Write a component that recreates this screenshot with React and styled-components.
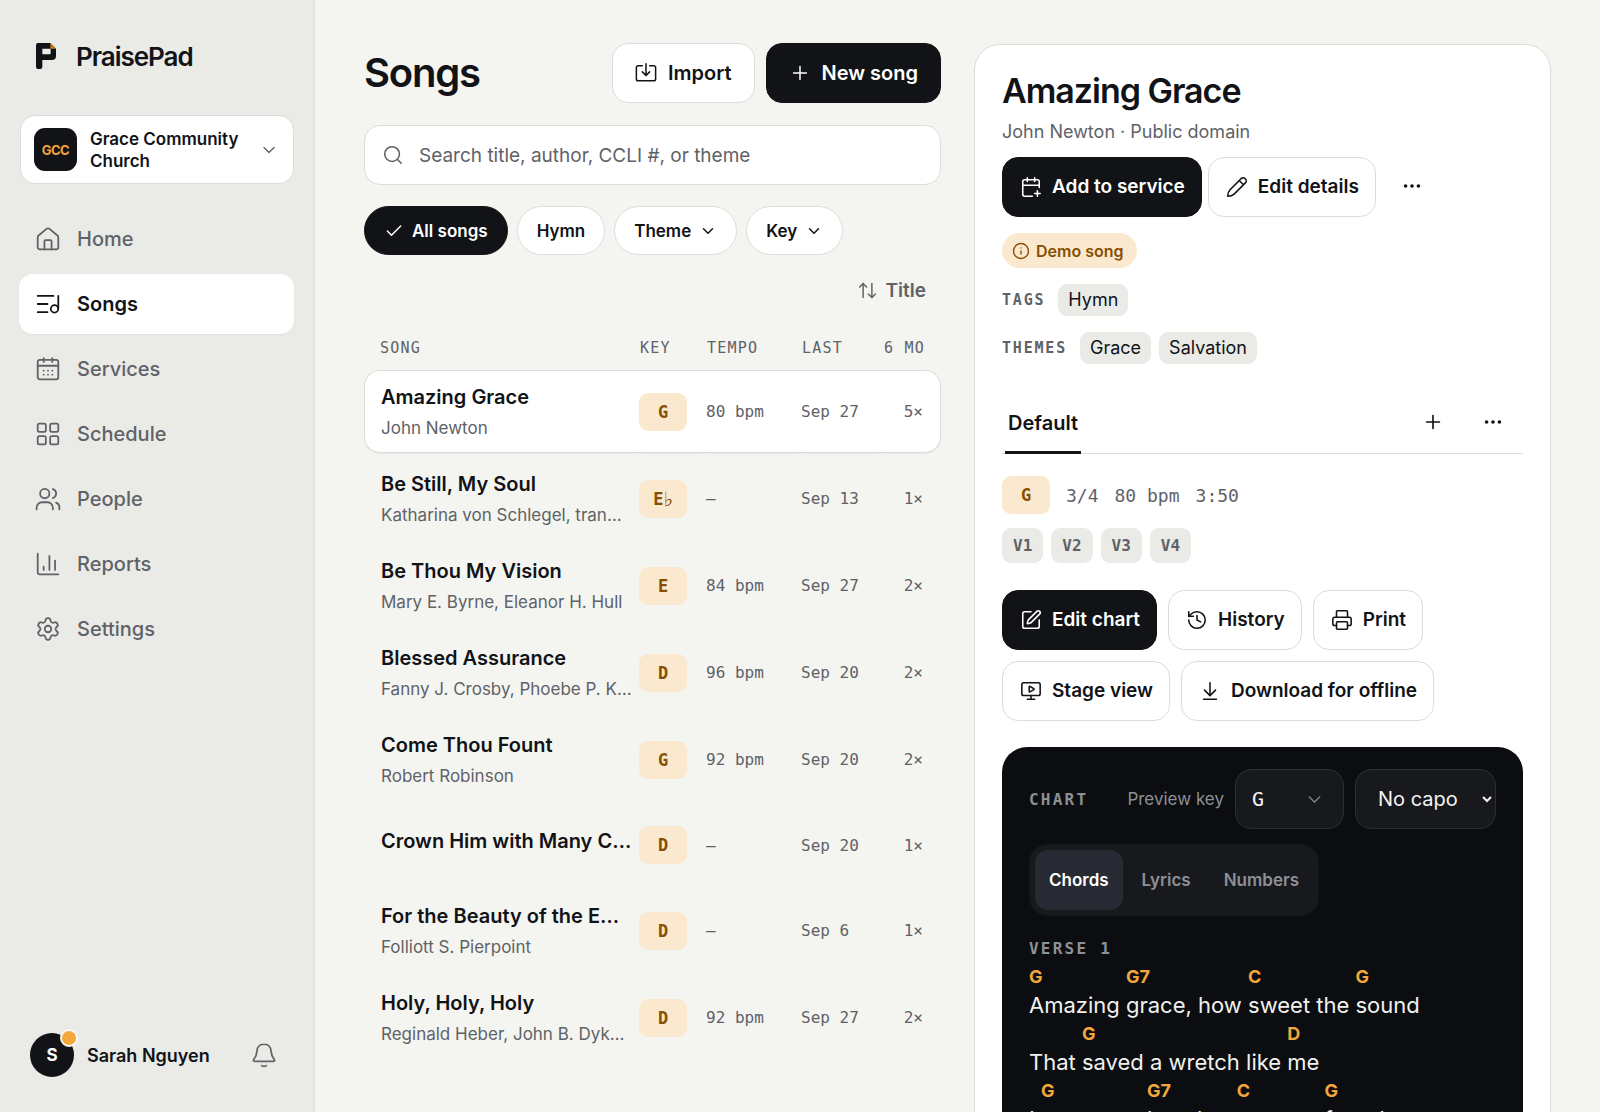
import React from "react";
import styled, { createGlobalStyle, css } from "styled-components";
import {
  ArrowDownToLine,
  ArrowUpDown,
  CalendarPlus,
  Check,
  ChevronDown,
  Ellipsis,
  History,
  Info,
  MonitorPlay,
  Plus,
  Printer,
  Search,
  Settings,
  SquarePen,
} from "lucide-react";

const color = {
  ink: "#111317",
  muted: "#5f6267",
  line: "#dcddda",
  page: "#f4f5f1",
  side: "#eaebe7",
  amber: "#f2a63b",
  amberSoft: "#fbe9cf",
  amberInk: "#874f00",
  panel: "#0b0d10",
  control: "#17191d",
  controlLine: "#2c2e33",
  dim: "#8d9096",
};

const sans = `Inter, "Liberation Sans", sans-serif`;
const mono = `"DejaVu Sans Mono", "Liberation Mono", monospace`;

function Stroke({ size = 26, children }) {
  return (
    <svg
      width={size}
      height={size}
      viewBox="0 0 24 24"
      fill="none"
      stroke="currentColor"
      strokeWidth="1.65"
      strokeLinecap="round"
      strokeLinejoin="round"
      aria-hidden="true"
    >
      {children}
    </svg>
  );
}

const HomeIcon = () => (
  <Stroke>
    <path d="M2.500 10.500c0-.7.3-1.300.8-1.700l7.300-6.100a2.200 2.200 0 0 1 2.800 0l7.300 6.100c.5.4.8 1 .8 1.700v9a2 2 0 0 1-2 2h-15a2 2 0 0 1-2-2z" />
    <path d="M8.700 21.500V14a1 1 0 0 1 1-1h4.600a1 1 0 0 1 1 1v7.500" />
  </Stroke>
);
const SongsIcon = () => (
  <Stroke>
    <path d="M2.500 4.500h14.500M2.500 12h9M2.500 19.500h9M21.500 4.500V16" />
    <circle cx="18" cy="16.500" r="3.400" />
  </Stroke>
);
const ServicesIcon = () => (
  <Stroke>
    <rect x="2.500" y="3.500" width="19" height="18" rx="2" />
    <path d="M2.500 9h19M8 2v3.500M16 2v3.500M8 13.500h.01M12 13.500h.01M16 13.500h.01M8 17.200h.01M12 17.200h.01M16 17.200h.01" />
  </Stroke>
);
const ScheduleIcon = () => (
  <Stroke>
    <rect x="2.500" y="2.500" width="7.500" height="7.500" rx="1.500" />
    <rect x="14" y="2.500" width="7.500" height="7.500" rx="1.500" />
    <rect x="2.500" y="14" width="7.500" height="7.500" rx="1.500" />
    <rect x="14" y="14" width="7.500" height="7.500" rx="1.500" />
  </Stroke>
);
const PeopleIcon = () => (
  <Stroke>
    <circle cx="9" cy="7" r="4.300" />
    <path d="M1.500 21.500V20a5 5 0 0 1 5-5h5a5 5 0 0 1 5 5v1.500M16.500 2.900a4.300 4.300 0 0 1 0 8.200M19.500 15.300a4.500 4.500 0 0 1 3 4.200v2" />
  </Stroke>
);
const ReportsIcon = () => (
  <Stroke>
    <path d="M2.500 2.500v17a2 2 0 0 0 2 2h17M8 14.500v3M13.300 4.500v13M18.500 9v8.500" />
  </Stroke>
);
const BellIcon = () => (
  <Stroke>
    <path d="M12 2c-3.800 0-6.300 2.800-6.500 6.300-.2 3.300-.9 5.400-3 7.900-.6.800-.2 1.600.7 1.600h17.600c.9 0 1.300-.8.7-1.600-2.100-2.500-2.800-4.600-3-7.900C18.300 4.800 15.800 2 12 2z" />
    <path d="M10 21.800c1.200.900 2.800.900 4 0" />
  </Stroke>
);
const ImportIcon = () => (
  <Stroke size={22}>
    <path d="M8 4H3.500a2 2 0 0 0-2 2v12.500a2 2 0 0 0 2 2h17a2 2 0 0 0 2-2V6a2 2 0 0 0-2-2H16M12 2v12.500M8 10.800l4 4 4-4" />
  </Stroke>
);
const PencilIcon = () => (
  <Stroke size={22}>
    <path d="M1.800 22.200c0-2.900.6-5.200 2.400-7L16.800 2.600a2.600 2.600 0 0 1 3.700 0l.9.900a2.600 2.600 0 0 1 0 3.700L8.800 19.800c-1.800 1.800-4.100 2.400-7 2.400zM14.500 5l4.500 4.500" />
  </Stroke>
);

const nav = [
  { label: "Home", icon: <HomeIcon /> },
  { label: "Songs", icon: <SongsIcon />, active: true },
  { label: "Services", icon: <ServicesIcon /> },
  { label: "Schedule", icon: <ScheduleIcon /> },
  { label: "People", icon: <PeopleIcon /> },
  { label: "Reports", icon: <ReportsIcon /> },
  { label: "Settings", icon: <Settings size={26} strokeWidth={1.65} /> },
];

const songs = [
  { title: "Amazing Grace", by: "John Newton", songKey: "G", tempo: "80 bpm", last: "Sep 27", count: "5×", selected: true },
  { title: "Be Still, My Soul", by: "Katharina von Schlegel, tran…", songKey: "E", flat: true, tempo: "—", last: "Sep 13", count: "1×" },
  { title: "Be Thou My Vision", by: "Mary E. Byrne, Eleanor H. Hull", songKey: "E", tempo: "84 bpm", last: "Sep 27", count: "2×" },
  { title: "Blessed Assurance", by: "Fanny J. Crosby, Phoebe P. K…", songKey: "D", tempo: "96 bpm", last: "Sep 20", count: "2×" },
  { title: "Come Thou Fount", by: "Robert Robinson", songKey: "G", tempo: "92 bpm", last: "Sep 20", count: "2×" },
  { title: "Crown Him with Many C…", songKey: "D", tempo: "—", last: "Sep 20", count: "1×" },
  { title: "For the Beauty of the E…", by: "Folliott S. Pierpoint", songKey: "D", tempo: "—", last: "Sep 6", count: "1×" },
  { title: "Holy, Holy, Holy", by: "Reginald Heber, John B. Dyk…", songKey: "D", tempo: "92 bpm", last: "Sep 27", count: "2×" },
];

const verse = [
  [["G", "Amazing "], ["G7", "grace, how "], ["C", "sweet the "], ["G", "sound"]],
  [["", "That "], ["G", "saved a wretch like "], ["D", "me"]],
  [["", "I "], ["G", "once was "], ["G7", "lost, but "], ["C", "now am "], ["G", "found"]],
];

function App() {
  return (
    <Shell>
      <GlobalStyle />
      <Sidebar />
      <Main>
        <SongList />
        <SongDetail />
      </Main>
    </Shell>
  );
}

function Sidebar() {
  return (
    <SidebarStyled>
      <Brand href="#">
        <svg width="20" height="26" viewBox="0 0 60 78" aria-hidden="true">
          <path
            fill={color.ink}
            d="M6 0H43L60 17V39a12 12 0 0 1-12 12H19V72a6 6 0 0 1-6 6H6a6 6 0 0 1-6-6V6a6 6 0 0 1 6-6zM19 17V34H41a3 3 0 0 0 3-3V17z"
          />
          <path fill="#c97a17" d="M43 0 60 17H46a3 3 0 0 1-3-3z" />
        </svg>
        PraisePad
      </Brand>

      <OrgButton>
        <OrgMark>GCC</OrgMark>
        <OrgName>Grace Community Church</OrgName>
        <ChevronDown size={20} strokeWidth={1.6} />
      </OrgButton>

      <NavStyled aria-label="Main">
        {nav.map((item) => (
          <NavLink key={item.label} href="#" $active={item.active}>
            {item.icon}
            {item.label}
          </NavLink>
        ))}
      </NavStyled>

      <Account>
        <Avatar>
          S<Dot />
        </Avatar>
        <AccountName>Sarah Nguyen</AccountName>
        <BellButton aria-label="Notifications">
          <BellIcon />
        </BellButton>
      </Account>
    </SidebarStyled>
  );
}

function SongList() {
  return (
    <Column>
      <ListHeader>
        <PageTitle>Songs</PageTitle>
        <Actions $gap={11}>
          <Button $large>
            <ImportIcon /> Import
          </Button>
          <Button $large $primary>
            <Plus size={22} strokeWidth={1.6} /> New song
          </Button>
        </Actions>
      </ListHeader>

      <SearchBox>
        <Search size={22} strokeWidth={1.7} />
        <SearchInput type="search" aria-label="Search songs" placeholder="Search title, author, CCLI #, or theme" />
      </SearchBox>

      <Chips>
        <Chip $active>
          <Check size={20} strokeWidth={1.8} /> All songs
        </Chip>
        <Chip>Hymn</Chip>
        <Chip>
          Theme <ChevronDown size={18} strokeWidth={2} />
        </Chip>
        <Chip>
          Key <ChevronDown size={18} strokeWidth={2} />
        </Chip>
      </Chips>

      <SortButton>
        <ArrowUpDown size={21} strokeWidth={1.7} /> Title
      </SortButton>

      <Table>
        <colgroup>
          <col />
          <col width="67" />
          <col width="95" />
          <col width="80" />
          <col width="60" />
        </colgroup>
        <thead>
          <tr>
            <HeadCell>SONG</HeadCell>
            <HeadCell>KEY</HeadCell>
            <HeadCell>TEMPO</HeadCell>
            <HeadCell>LAST</HeadCell>
            <HeadCell $end>6 MO</HeadCell>
          </tr>
        </thead>
        <tbody>
          {songs.map((song) => (
            <Row key={song.title} $selected={song.selected} $short={!song.by}>
              <Cell>
                <SongTitle>{song.title}</SongTitle>
                {song.by && <SongBy>{song.by}</SongBy>}
              </Cell>
              <Cell>
                <KeyBadge>
                  {song.songKey}
                  {song.flat && <Flat>♭</Flat>}
                </KeyBadge>
              </Cell>
              <Cell>{song.tempo}</Cell>
              <Cell>{song.last}</Cell>
              <Cell $end>{song.count}</Cell>
            </Row>
          ))}
        </tbody>
      </Table>
    </Column>
  );
}

function SongDetail() {
  return (
    <Detail>
      <DetailTitle>Amazing Grace</DetailTitle>
      <DetailBy>John Newton · Public domain</DetailBy>
      <Actions $gap={6}>
        <Button $primary>
          <CalendarPlus size={22} strokeWidth={1.7} /> Add to service
        </Button>
        <Button>
          <PencilIcon /> Edit details
        </Button>
        <IconButton aria-label="More song actions">
          <Ellipsis size={22} strokeWidth={2} />
        </IconButton>
      </Actions>

      <DemoPill>
        <Info size={18} strokeWidth={1.8} /> Demo song
      </DemoPill>
      <TagRow>
        <TagLabel>TAGS</TagLabel>
        <Tag>Hymn</Tag>
      </TagRow>
      <TagRow>
        <TagLabel>THEMES</TagLabel>
        <Tag>Grace</Tag>
        <Tag>Salvation</Tag>
      </TagRow>

      <TabBar>
        <Tab>Default</Tab>
        <TabTools>
          <IconButton aria-label="Add arrangement">
            <Plus size={22} strokeWidth={1.8} />
          </IconButton>
          <IconButton aria-label="Arrangement actions">
            <Ellipsis size={22} strokeWidth={2} />
          </IconButton>
        </TabTools>
      </TabBar>

      <Meta>
        <KeyBadge>G</KeyBadge>
        <span>3/4</span>
        <span>80 bpm</span>
        <span>3:50</span>
      </Meta>
      <Sections>
        <SectionChip>V1</SectionChip>
        <SectionChip>V2</SectionChip>
        <SectionChip>V3</SectionChip>
        <SectionChip>V4</SectionChip>
      </Sections>

      <Actions $gap={11}>
        <Button $primary>
          <SquarePen size={22} strokeWidth={1.7} /> Edit chart
        </Button>
        <Button>
          <History size={22} strokeWidth={1.7} /> History
        </Button>
        <Button>
          <Printer size={22} strokeWidth={1.7} /> Print
        </Button>
        <Button>
          <MonitorPlay size={22} strokeWidth={1.7} /> Stage view
        </Button>
        <Button>
          <ArrowDownToLine size={22} strokeWidth={1.7} /> Download for offline
        </Button>
      </Actions>

      <Chart />
    </Detail>
  );
}

function Chart() {
  return (
    <ChartPanel>
      <ChartBar>
        <ChartLabel>CHART</ChartLabel>
        <PreviewLabel htmlFor="preview-key">Preview key</PreviewLabel>
        <KeySelectWrap>
          <KeySelect id="preview-key" defaultValue="G">
            <option>G</option>
            <option>A</option>
            <option>D</option>
          </KeySelect>
          <ChevronDown size={21} strokeWidth={1.6} />
        </KeySelectWrap>
        <CapoSelect aria-label="Capo" defaultValue="No capo">
          <option>No capo</option>
          <option>Capo 1</option>
        </CapoSelect>
      </ChartBar>

      <Segments>
        <Segment $active>Chords</Segment>
        <Segment>Lyrics</Segment>
        <Segment>Numbers</Segment>
      </Segments>

      <VerseLabel as="h3">VERSE 1</VerseLabel>
      {verse.map((line, i) => (
        <Line key={i}>
          {line.map(([chord, text], j) => (
            <Syllable key={j}>
              <Chord>{chord}</Chord>
              <Lyric>{text}</Lyric>
            </Syllable>
          ))}
        </Line>
      ))}
    </ChartPanel>
  );
}

const GlobalStyle = createGlobalStyle`
  * {
    box-sizing: border-box;
  }
  body {
    margin: 0;
    background: ${color.page};
    color: ${color.ink};
    font-family: ${sans};
    font-size: 18px;
  }
  h1, h2, h3, p {
    margin: 0;
  }
  button, input, select {
    font-family: inherit;
    color: inherit;
  }
  button {
    cursor: pointer;
  }
  svg {
    flex-shrink: 0;
  }
`;

const Shell = styled.div`
  display: flex;
  height: 100vh;
  overflow: hidden;
`;

const SidebarStyled = styled.aside`
  display: flex;
  flex-direction: column;
  flex: 0 0 315px;
  padding: 34px 20px 35px;
  background: ${color.side};
  border-right: 2px solid #e1e2de;
`;

const Brand = styled.a`
  display: flex;
  align-items: center;
  gap: 20px;
  height: 44px;
  padding-left: 16px;
  color: ${color.ink};
  font-size: 26px;
  font-weight: 600;
  letter-spacing: -0.04em;
  text-decoration: none;
`;

const OrgButton = styled.button`
  display: flex;
  align-items: center;
  gap: 13px;
  height: 69px;
  margin: 37px -1px 0 0;
  padding: 0 14px 0 13px;
  background: #fff;
  border: 1px solid ${color.line};
  border-radius: 15px;
  text-align: left;

  svg {
    color: ${color.muted};
  }
`;

const OrgMark = styled.span`
  display: grid;
  place-items: center;
  flex: 0 0 43px;
  height: 43px;
  border-radius: 11px;
  background: ${color.ink};
  color: ${color.amber};
  font-size: 13px;
  font-weight: 700;
  letter-spacing: -0.04em;
`;

const OrgName = styled.span`
  flex: 1;
  font-size: 17px;
  font-weight: 600;
  line-height: 22px;
`;

const NavStyled = styled.nav`
  display: flex;
  flex-direction: column;
  gap: 5px;
  margin: 25px -1px 0;
`;

const NavLink = styled.a`
  display: flex;
  align-items: center;
  gap: 16px;
  height: 60px;
  padding: 0 16px;
  border-radius: 14px;
  color: ${color.muted};
  font-size: 20px;
  font-weight: 500;
  text-decoration: none;
  ${({ $active }) =>
    $active &&
    css`
      background: #fff;
      color: ${color.ink};
      font-weight: 600;
      box-shadow: 0 1px 2px rgba(0, 0, 0, 0.04);
    `}
`;

const Account = styled.div`
  display: flex;
  align-items: center;
  gap: 13px;
  margin-top: auto;
  padding: 0 10px;
`;

const Avatar = styled.div`
  position: relative;
  display: grid;
  place-items: center;
  width: 44px;
  height: 44px;
  border-radius: 50%;
  background: ${color.ink};
  color: #fff;
  font-size: 17px;
  font-weight: 700;
`;

const Dot = styled.span`
  position: absolute;
  top: -4px;
  right: -4px;
  width: 18px;
  height: 18px;
  border: 2px solid #f8f8f5;
  border-radius: 50%;
  background: ${color.amber};
`;

const AccountName = styled.span`
  flex: 1;
  font-size: 18px;
  font-weight: 600;
`;

const BellButton = styled.button`
  display: flex;
  padding: 6px;
  border: 0;
  background: none;
  color: ${color.muted};
`;

const Main = styled.main`
  flex: 1;
  display: grid;
  grid-template-columns: minmax(0, 1fr) minmax(0, 1fr);
  align-items: start;
  gap: 33px;
  padding: 43px 49px;
  overflow-y: auto;
  scrollbar-width: none;
`;

const Column = styled.section`
  display: flex;
  flex-direction: column;
`;

const ListHeader = styled.header`
  display: flex;
  align-items: center;
  justify-content: space-between;
`;

const PageTitle = styled.h1`
  padding-bottom: 2px;
  font-size: 40px;
  font-weight: 600;
  letter-spacing: -0.03em;
`;

const Actions = styled.div`
  display: flex;
  flex-wrap: wrap;
  gap: ${({ $gap }) => $gap}px;
`;

const Button = styled.button`
  display: inline-flex;
  align-items: center;
  gap: 10px;
  height: 60px;
  padding: 0 16px 1px 17px;
  border: 1px solid ${color.line};
  border-radius: 16px;
  background: #fff;
  font-size: 19px;
  font-weight: 600;
  white-space: nowrap;
  ${({ $large }) =>
    $large &&
    css`
      gap: 11px;
      padding: 0 22px;
      font-size: 20px;
    `}
  ${({ $primary }) =>
    $primary &&
    css`
      background: ${color.ink};
      border-color: ${color.ink};
      color: #fff;
    `}
`;

const IconButton = styled.button`
  display: grid;
  place-items: center;
  width: 60px;
  height: 58px;
  border: 0;
  background: none;
`;

const SearchBox = styled.label`
  display: flex;
  align-items: center;
  gap: 15px;
  height: 60px;
  margin-top: 22px;
  padding: 0 17px;
  border: 1px solid ${color.line};
  border-radius: 16px;
  background: #fff;
  color: ${color.muted};
`;

const SearchInput = styled.input`
  flex: 1;
  padding: 0;
  border: 0;
  outline: 0;
  background: none;
  font-size: 19px;

  &::placeholder {
    color: ${color.muted};
    opacity: 1;
  }
`;

const Chips = styled.div`
  display: flex;
  gap: 9px;
  margin-top: 21px;
`;

const Chip = styled.button`
  display: inline-flex;
  align-items: center;
  gap: 8px;
  height: 49px;
  padding: 0 19px;
  border: 1px solid ${color.line};
  border-radius: 25px;
  background: #fff;
  font-size: 17px;
  font-weight: 600;
  ${({ $active }) =>
    $active &&
    css`
      background: ${color.ink};
      border-color: ${color.ink};
      color: #fff;
    `}
`;

const SortButton = styled.button`
  display: inline-flex;
  align-items: center;
  align-self: flex-end;
  gap: 8px;
  height: 48px;
  margin-top: 11px;
  padding: 0 15px;
  border: 0;
  background: none;
  color: ${color.muted};
  font-size: 19px;
  font-weight: 600;
`;

const Table = styled.table`
  width: 100%;
  table-layout: fixed;
  border-collapse: separate;
  border-spacing: 0 4px;
`;

const HeadCell = styled.th`
  height: 48px;
  padding: 12px ${({ $end }) => ($end ? 16 : 0)}px 0 1px;
  color: ${color.muted};
  font-family: ${mono};
  font-size: 15px;
  font-weight: 400;
  letter-spacing: 0.08em;
  text-align: ${({ $end }) => ($end ? "right" : "left")};
  white-space: nowrap;

  &:first-child {
    padding-left: 16px;
  }
`;

const Cell = styled.td`
  padding: 0 ${({ $end }) => ($end ? 17 : 0)}px 0 0;
  border: 1px solid transparent;
  border-width: 1px 0;
  color: ${color.muted};
  font-family: ${mono};
  font-size: 16px;
  text-align: ${({ $end }) => ($end ? "right" : "left")};
  white-space: nowrap;

  &:first-child {
    padding: 0 6px 2px 16px;
    border-left-width: 1px;
    border-radius: 16px 0 0 16px;
    font-family: ${sans};
  }
  &:last-child {
    border-right-width: 1px;
    border-radius: 0 16px 16px 0;
  }
`;

const Row = styled.tr`
  height: ${({ $short }) => ($short ? 80 : 83)}px;
  ${({ $selected }) =>
    $selected &&
    css`
      ${Cell} {
        background: #fff;
        border-color: ${color.line};
        box-shadow: 0 2px 2px -1px rgba(0, 0, 0, 0.06);
      }
    `}
`;

const SongTitle = styled.div`
  overflow: hidden;
  padding-bottom: 6px;
  color: ${color.ink};
  font-size: 20px;
  font-weight: 600;
  line-height: 28px;
  text-overflow: ellipsis;
`;

const SongBy = styled.div`
  overflow: hidden;
  font-size: 17px;
  line-height: 22px;
  text-overflow: ellipsis;
`;

const KeyBadge = styled.span`
  display: inline-flex;
  align-items: center;
  justify-content: center;
  width: 48px;
  height: 38px;
  border-radius: 9px;
  background: ${color.amberSoft};
  color: ${color.amberInk};
  font-family: ${mono};
  font-size: 17px;
  font-weight: 700;
  vertical-align: middle;
`;

const Flat = styled.span`
  font-family: "DejaVu Sans", sans-serif;
  font-size: 20px;
  font-weight: 400;
  line-height: 20px;
`;

const Detail = styled.article`
  padding: 27px;
  margin-top: 1px;
  border: 1px solid ${color.line};
  border-radius: 26px;
  background: #fff;
`;

const DetailTitle = styled.h2`
  font-size: 34px;
  font-weight: 600;
  letter-spacing: -0.03em;
  line-height: 38px;
`;

const DetailBy = styled.p`
  margin: 9px 0 12px;
  color: ${color.muted};
  font-size: 18px;
  line-height: 26px;
`;

const DemoPill = styled.div`
  display: inline-flex;
  align-items: center;
  gap: 6px;
  height: 35px;
  margin-top: 16px;
  padding: 0 13px 0 10px;
  border-radius: 18px;
  background: ${color.amberSoft};
  color: ${color.amberInk};
  font-size: 16px;
  font-weight: 600;
`;

const TagRow = styled.div`
  display: flex;
  align-items: center;
  gap: 8px;
  margin-top: 16px;
`;

const TagLabel = styled.span`
  margin-right: 5px;
  color: ${color.muted};
  font-family: ${mono};
  font-size: 15px;
  font-weight: 700;
  letter-spacing: 0.12em;
`;

const Tag = styled.span`
  padding: 0 10px;
  border-radius: 9px;
  background: ${color.side};
  font-size: 18px;
  line-height: 32px;
`;

const TabBar = styled.div`
  display: flex;
  justify-content: space-between;
  height: 61px;
  margin-top: 29px;
  border-bottom: 1px solid ${color.line};
`;

const Tab = styled.button`
  margin: 0 3px -1px;
  padding: 2px 3px 0;
  border: 0;
  border-bottom: 3px solid ${color.ink};
  background: none;
  font-size: 20px;
  font-weight: 600;
`;

const TabTools = styled.div`
  display: flex;
`;

const Meta = styled.div`
  display: flex;
  align-items: center;
  gap: 16px;
  margin-top: 22px;
  color: ${color.muted};
  font-family: ${mono};
  font-size: 18px;
`;

const Sections = styled.div`
  display: flex;
  gap: 8px;
  margin: 14px 0 27px;
`;

const SectionChip = styled.span`
  padding: 0 11px;
  border-radius: 9px;
  background: ${color.side};
  color: ${color.muted};
  font-family: ${mono};
  font-size: 16px;
  font-weight: 700;
  line-height: 35px;
`;

const ChartPanel = styled.section`
  margin-top: 26px;
  padding: 22px 27px 27px;
  border-radius: 25px;
  background: ${color.panel};
  color: #f1f1ee;
`;

const ChartBar = styled.div`
  display: flex;
  align-items: center;
  gap: 11px;
`;

const ChartLabel = styled.span`
  flex: 1;
  color: ${color.dim};
  font-family: ${mono};
  font-size: 16px;
  font-weight: 700;
  letter-spacing: 0.14em;
`;

const VerseLabel = styled(ChartLabel)`
  margin-bottom: 4px;
  line-height: 20px;
`;

const PreviewLabel = styled.label`
  color: ${color.dim};
  font-size: 17px;
`;

const controlBox = css`
  height: 60px;
  border: 1px solid ${color.controlLine};
  border-radius: 16px;
  background: ${color.control};
  color: #f4f4f2;
  font-size: 20px;
`;

const KeySelectWrap = styled.div`
  display: grid;
  grid-template-columns: 1fr 40px;
  align-items: center;
  width: 109px;
  color: ${color.dim};

  svg {
    grid-area: 1 / 2;
    pointer-events: none;
    z-index: 1;
  }
`;

const KeySelect = styled.select`
  ${controlBox}
  grid-area: 1 / 1 / 2 / 3;
  appearance: none;
  width: 100%;
  padding: 0 16px;
  font-family: ${mono};
`;

const CapoSelect = styled.select`
  ${controlBox}
  width: 141px;
  padding: 0 0 0 18px;
`;

const Segments = styled.div`
  display: inline-flex;
  margin: 15px 0 23px;
  padding: 5px;
  border: 1px solid #131519;
  border-radius: 18px;
  background: ${color.control};
`;

const Segment = styled.button`
  height: 60px;
  padding: 0 14px;
  border: 0;
  border-radius: 13px;
  background: ${({ $active }) => ($active ? "#282a33" : "none")};
  color: ${({ $active }) => ($active ? "#fff" : color.dim)};
  font-size: 17px;
  font-weight: 600;

  & + & {
    margin-left: 5px;
  }
`;

const Line = styled.div`
  display: flex;
`;

const Syllable = styled.span`
  display: flex;
  flex-direction: column;
  white-space: pre;
`;

const Chord = styled.span`
  height: 27px;
  color: ${color.amber};
  font-size: 18px;
  font-weight: 700;
  line-height: 27px;
`;

const Lyric = styled.span`
  font-size: 22px;
  line-height: 30px;
`;

export default App;
